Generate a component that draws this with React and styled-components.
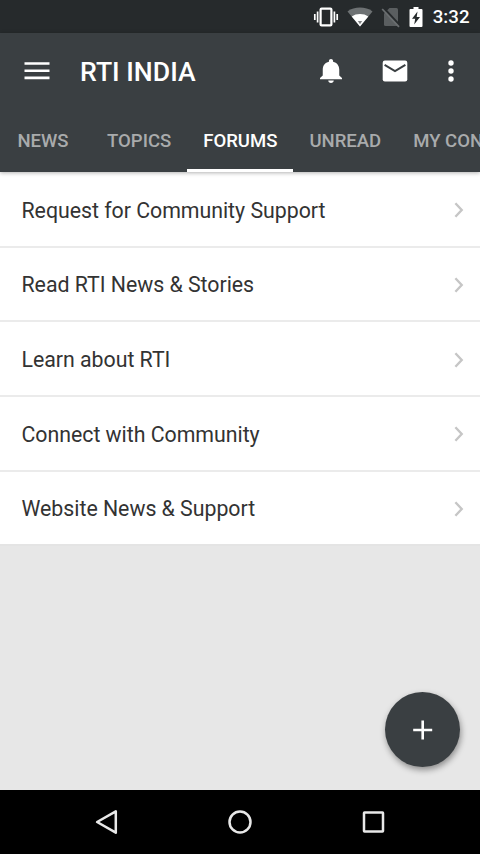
import React from "react";
import styled, { createGlobalStyle } from "styled-components";

const tabs = ["NEWS", "TOPICS", "FORUMS", "UNREAD", "MY CONTENT"];

const forums = [
  "Request for Community Support",
  "Read RTI News & Stories",
  "Learn about RTI",
  "Connect with Community",
  "Website News & Support",
];

const StatusIcons = () => (
  <>
    <svg width="26" height="22" viewBox="0 0 26 22">
      <rect x="7.6" y="2.6" width="10.8" height="16.8" rx="1" fill="none" stroke="#fff" strokeWidth="2.2" />
      <path d="M1.8 8v6M4.6 5.5v11M24.2 8v6M21.4 5.5v11" stroke="#fff" strokeWidth="1.7" />
    </svg>
    <svg width="26" height="22" viewBox="0 0 26 22">
      <path d="M13 20.5L.5 5.4C4 2.6 8.4 1.5 13 1.5s9 1.1 12.5 3.9z" fill="#6d7173" />
      <path d="M13 20.5L4.7 10.5C7 8.8 10 8 13 8s6 .8 8.3 2.5z" fill="#fff" />
      <path d="M10.8 15h4.4L13 18.3z" fill="#7d8082" />
    </svg>
    <svg width="20" height="22" viewBox="0 0 20 22">
      <path d="M8.5 2H15.5Q17 2 17 3.5V20H4.5Q3 20 3 18.5V7.5z" fill="#5a5e60" />
      <path d="M2.8 2.3L19.3 20" stroke="#262a2c" strokeWidth="2.4" />
      <path d="M1.2 3L18 20.8" stroke="#6a6e70" strokeWidth="1.8" />
    </svg>
    <svg width="14" height="22" viewBox="0 0 14 22">
      <path d="M4.5 1h5v2H12.5Q13.5 3 13.5 4V20Q13.5 21 12.5 21H1.5Q.5 21 .5 20V4Q.5 3 1.5 3H4.5z" fill="#fff" />
      <path d="M8.5 5.5L3 12.7h3.2L5.2 18.5 11 11H7.7z" fill="#262a2c" />
    </svg>
  </>
);

const App = () => {
  return (
    <Screen>
      <GlobalStyle />
      <StatusBar>
        <StatusIcons />
        <Clock>3:32</Clock>
      </StatusBar>
      <Header>
        <Toolbar>
          <MenuButton aria-label="Menu">
            <svg width="26" height="18" viewBox="0 0 26 18">
              <path d="M.5 1.5h25M.5 8.7h25M.5 15.9h25" stroke="#fff" strokeWidth="2.6" />
            </svg>
          </MenuButton>
          <Title>RTI INDIA</Title>
          <Actions>
            <IconButton aria-label="Notifications">
              <svg width="22" height="24" viewBox="4 2.5 16 19.5" preserveAspectRatio="none">
                <path
                  fill="#fff"
                  d="M12 22c1.1 0 2-.9 2-2h-4c0 1.1.89 2 2 2zm6-6v-5c0-3.07-1.64-5.64-4.5-6.32V4c0-.83-.67-1.5-1.5-1.5s-1.5.67-1.5 1.5v.68C7.63 5.36 6 7.92 6 11v5l-2 2v1h16v-1l-2-2z"
                />
              </svg>
            </IconButton>
            <IconButton aria-label="Messages">
              <svg width="26" height="22" viewBox="0 0 26 22">
                <rect x=".7" y=".6" width="24.6" height="20.8" rx="2.2" fill="#fff" />
                <path d="M2.6 4.8L13 11 23.4 4.8" fill="none" stroke="#3a3f42" strokeWidth="2" />
              </svg>
            </IconButton>
            <IconButton aria-label="More" $narrow>
              <svg width="6" height="22" viewBox="0 0 6 22">
                <circle cx="3" cy="3" r="2.7" fill="#fff" />
                <circle cx="3" cy="11" r="2.7" fill="#fff" />
                <circle cx="3" cy="19" r="2.7" fill="#fff" />
              </svg>
            </IconButton>
          </Actions>
        </Toolbar>
        <Tabs>
          {tabs.map((tab) => (
            <Tab key={tab} $active={tab === "FORUMS"}>
              {tab}
            </Tab>
          ))}
        </Tabs>
      </Header>
      <Content>
        <List>
          {forums.map((forum) => (
            <Row key={forum}>
              <span>{forum}</span>
              <svg width="10" height="16" viewBox="0 0 10 16">
                <path d="M1.4 1.3L7.7 8 1.4 14.7" fill="none" stroke="#c6c6c6" strokeWidth="2.4" />
              </svg>
            </Row>
          ))}
        </List>
        <AddButton aria-label="Add">
          <svg width="20" height="20" viewBox="0 0 20 20">
            <path d="M9.7 .5v19M.2 10h19" stroke="#fff" strokeWidth="2.6" />
          </svg>
        </AddButton>
      </Content>
      <NavBar>
        <svg width="26" height="28" viewBox="0 0 26 28">
          <path d="M3.1 14L21.8 3.3v21.4z" fill="none" stroke="#e8e8e8" strokeWidth="2.5" strokeLinejoin="round" />
        </svg>
        <svg width="26" height="28" viewBox="0 0 26 28">
          <circle cx="13" cy="14" r="10.5" fill="none" stroke="#e8e8e8" strokeWidth="2.5" />
        </svg>
        <svg width="26" height="28" viewBox="0 0 26 28">
          <rect x="3" y="4.6" width="19" height="19" rx=".5" fill="none" stroke="#e8e8e8" strokeWidth="2.5" />
        </svg>
      </NavBar>
    </Screen>
  );
};

export default App;

const GlobalStyle = createGlobalStyle`
  body {
    margin: 0;
  }
  * {
    box-sizing: border-box;
  }
  svg {
    display: block;
    flex-shrink: 0;
  }
`;

const Screen = styled.div`
  width: 480px;
  height: 854px;
  display: flex;
  flex-direction: column;
  overflow: hidden;
  background: #e7e7e7;
  font-family: Roboto, sans-serif;
`;

const StatusBar = styled.div`
  height: 33px;
  flex-shrink: 0;
  display: flex;
  align-items: center;
  justify-content: flex-end;
  gap: 8px;
  padding-right: 10.5px;
  background: #262a2c;
`;

const Clock = styled.span`
  margin-left: 1.5px;
  color: #fff;
  font-size: 18.67px;
  font-weight: 500;
  line-height: 33px;
  padding-top: 2px;
`;

const Header = styled.header`
  position: relative;
  z-index: 1;
  flex-shrink: 0;
  background: #3a3f42;
  box-shadow: 0 1px 4px rgba(0, 0, 0, 0.3);
`;

const Toolbar = styled.div`
  height: 75px;
  display: flex;
  align-items: center;
`;

const IconButton = styled.button`
  width: ${(props) => (props.$narrow ? "48px" : "64px")};
  height: 64px;
  display: flex;
  align-items: center;
  justify-content: center;
  padding: 0;
  border: none;
  background: none;
`;

const MenuButton = styled(IconButton)`
  width: 74px;
`;

const Title = styled.h1`
  margin: 0;
  padding: 2px 0 0 6px;
  color: #fff;
  font-size: 26.67px;
  font-weight: 500;
`;

const Actions = styled.div`
  display: flex;
  margin-left: auto;
  padding-right: 5.4px;
`;

const Tabs = styled.nav`
  height: 64px;
  display: flex;
  overflow: hidden;
  margin-left: -5px;
`;

const Tab = styled.div`
  min-width: 96px;
  flex-shrink: 0;
  display: flex;
  align-items: center;
  justify-content: center;
  padding: 5px 16px 0;
  border-bottom: 3px solid ${(props) => (props.$active ? "#fff" : "transparent")};
  color: ${(props) => (props.$active ? "#fff" : "#a9abac")};
  font-size: 18.55px;
  font-weight: 500;
  white-space: nowrap;
`;

const Content = styled.main`
  position: relative;
  flex: 1;
`;

const List = styled.div`
  padding-top: 1px;
  background: #fff;
`;

const Row = styled.div`
  height: 74.67px;
  display: flex;
  align-items: center;
  justify-content: space-between;
  padding: 2px 16px 0 21.5px;
  border-bottom: 2px solid #ebebeb;
  color: #333;
  font-size: 21.33px;
  letter-spacing: -0.03px;

  &:last-child {
    border-bottom-color: #e4e4e4;
  }
`;

const AddButton = styled.button`
  position: absolute;
  right: 20px;
  bottom: 23px;
  width: 75px;
  height: 75px;
  display: flex;
  align-items: center;
  justify-content: center;
  padding: 0;
  border: none;
  border-radius: 50%;
  background: #3a3f42;
  box-shadow: 1px 3px 6px rgba(0, 0, 0, 0.4);
`;

const NavBar = styled.footer`
  height: 64px;
  flex-shrink: 0;
  display: flex;
  align-items: center;
  justify-content: center;
  gap: 107.5px;
  background: #000;
`;
